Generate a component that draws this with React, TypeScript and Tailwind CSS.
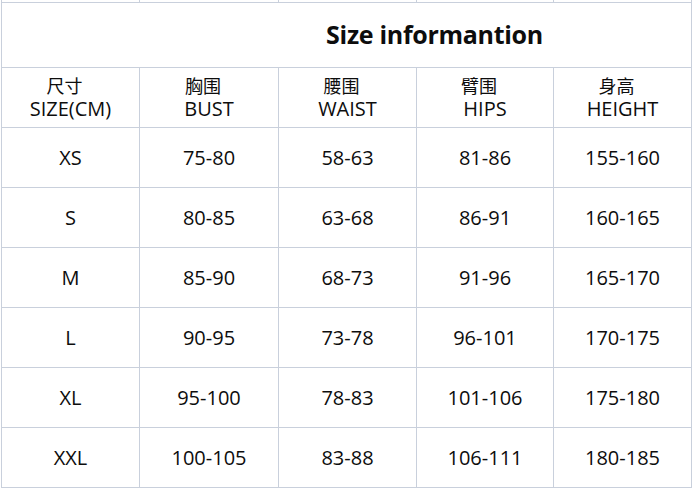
import React from "react";

const widths = ["w-[138px]", "w-[139px]", "w-[138px]", "w-[137px]", "w-[138px]"];

const headers = [
  { zh: "尺寸", en: "SIZE(CM)" },
  { zh: "胸围", en: "BUST" },
  { zh: "腰围", en: "WAIST" },
  { zh: "臂围", en: "HIPS" },
  { zh: "身高", en: "HEIGHT" },
];

const rows = [
  ["XS", "75-80", "58-63", "81-86", "155-160"],
  ["S", "80-85", "63-68", "86-91", "160-165"],
  ["M", "85-90", "68-73", "91-96", "165-170"],
  ["L", "90-95", "73-78", "96-101", "170-175"],
  ["XL", "95-100", "78-83", "101-106", "175-180"],
  ["XXL", "100-105", "83-88", "106-111", "180-185"],
];

const line = "border-[#c9d0dc]";

const App = () => {
  return (
    <main
      className="w-[693px] h-[488px] bg-white text-[#0d0d0d] overflow-hidden"
      style={{ fontFamily: '"Open Sans", "Noto Sans CJK SC", sans-serif' }}
    >
      <div className={`ml-[1px] w-[691px] border-l ${line}`}>
        {/* top strip */}
        <div className={`flex h-[3px] border-b ${line}`}>
          {widths.map((w, i) => (
            <div key={i} className={`${w} border-r ${line}`} />
          ))}
        </div>

        {/* title */}
        <div
          className={`h-[65px] border-b border-r ${line} flex items-center justify-center pl-[176px]`}
        >
          <h1 className="text-[25px] font-bold tracking-[-0.3px]">Size informantion</h1>
        </div>

        {/* header */}
        <div className={`flex h-[60px] border-b ${line}`}>
          {headers.map((h, i) => (
            <div
              key={i}
              className={`${widths[i]} border-r ${line} flex flex-col items-center justify-center gap-[2px]`}
            >
              <span
                className="text-[18px] leading-[20px] pr-3"
                style={{ fontFamily: '"Noto Sans CJK SC", sans-serif' }}
              >
                {h.zh}
              </span>
              <span className="text-[20px] leading-[24px]">{h.en}</span>
            </div>
          ))}
        </div>

        {/* data */}
        {rows.map((r, ri) => (
          <div key={ri} className={`flex h-[60px] border-b ${line}`}>
            {r.map((c, ci) => (
              <div
                key={ci}
                className={`${widths[ci]} border-r ${line} flex items-center justify-center text-[20px]`}
              >
                {c}
              </div>
            ))}
          </div>
        ))}
      </div>
    </main>
  );
};

export default App;
